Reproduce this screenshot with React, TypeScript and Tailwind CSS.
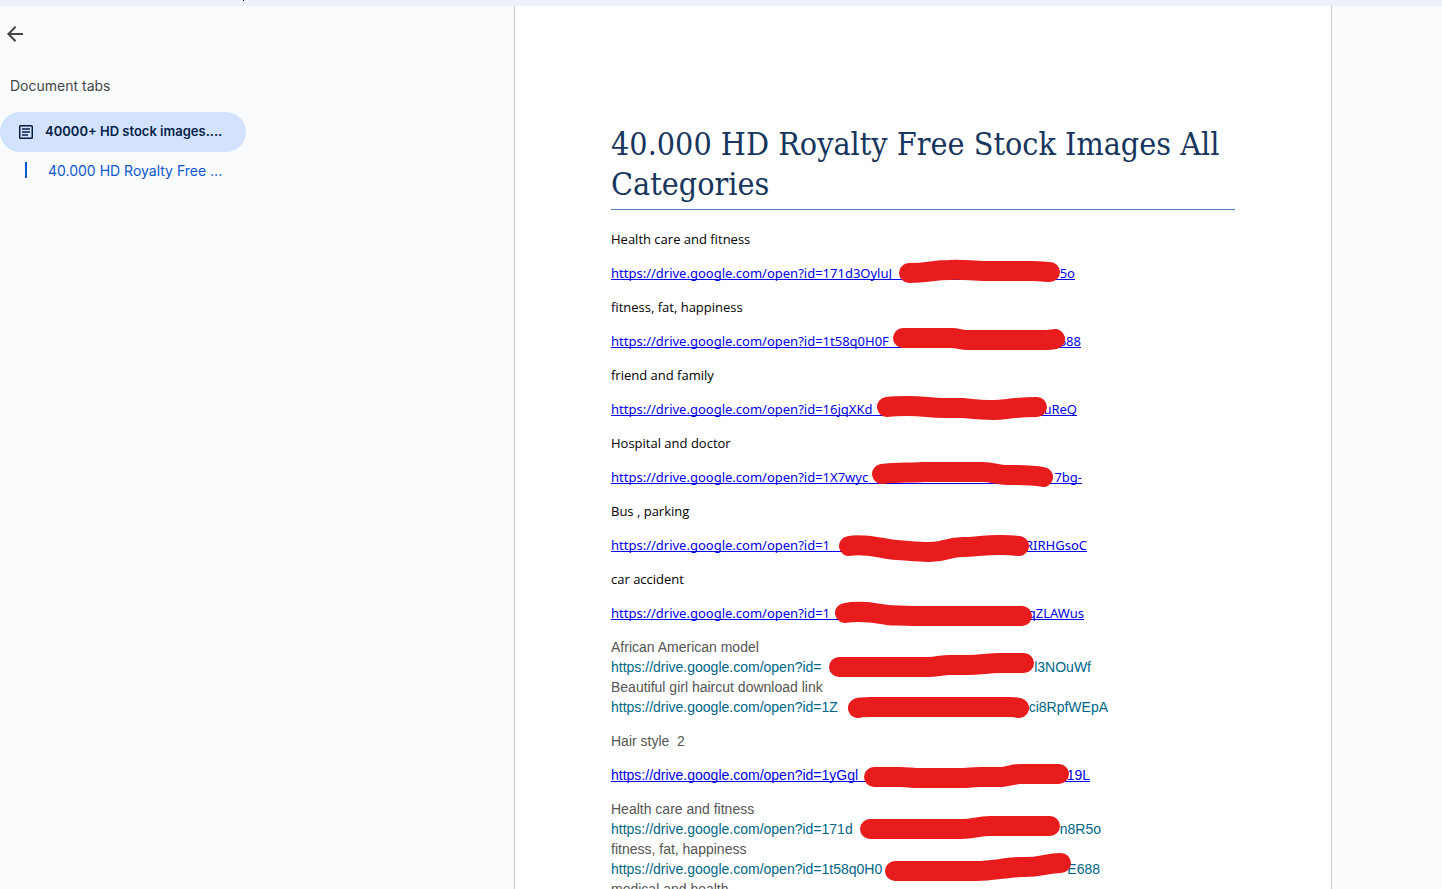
import clsx from "clsx";

type Variant = "calibri" | "arial" | "arialLink";

type Line =
	| { kind: "text"; text: string; variant: Variant; gap?: boolean }
	| {
			kind: "link";
			start: string;
			end: string;
			width: number;
			mark: string;
			variant: Variant;
			gap?: boolean;
	  };

const BASE = "https://drive.google.com/open?id=";

const lines: Line[] = [
	{ kind: "text", text: "Health care and fitness", variant: "calibri", gap: true },
	{
		kind: "link",
		start: "171d3OyluJ",
		end: "5o",
		width: 464,
		mark: "M298 10 C318 10 322 7 338 7 C352 6 360 8 375 8 H421 C430 8 436 9 439 9",
		variant: "calibri",
		gap: true,
	},
	{ kind: "text", text: "fitness, fat, happiness", variant: "calibri", gap: true },
	{
		kind: "link",
		start: "1t58q0H0F",
		end: "688",
		width: 470,
		mark: "M292 7 H341 C347 7 350 9 357 9 H434 Q440 9 444 8",
		variant: "calibri",
		gap: true,
	},
	{ kind: "text", text: "friend and family", variant: "calibri", gap: true },
	{
		kind: "link",
		start: "16jqXKd",
		end: "uReQ",
		width: 466,
		mark: "M276 8 C284 7 290 7 296 7 C316 7 316 9 334 9 H352 C362 10 370 11 382 11 C396 11 400 8 426 8",
		variant: "calibri",
		gap: true,
	},
	{ kind: "text", text: "Hospital and doctor", variant: "calibri", gap: true },
	{
		kind: "link",
		start: "1X7wyc",
		end: "7bg-",
		width: 471,
		mark: "M271 7 C286 5 300 6 312 5 H372 C382 5 386 8 396 8 C406 8 420 8 432 10",
		variant: "calibri",
		gap: true,
	},
	{ kind: "text", text: "Bus , parking", variant: "calibri", gap: true },
	{
		kind: "link",
		start: "1",
		end: "RIRHGsoC",
		width: 476,
		mark: "M238 11 C256 8 270 14 286 15 C300 16 306 17 318 17 C336 17 336 12 352 12 C366 12 382 8 408 11",
		variant: "calibri",
		gap: true,
	},
	{ kind: "text", text: "car accident", variant: "calibri", gap: true },
	{
		kind: "link",
		start: "1",
		end: "qZLAWus",
		width: 473,
		mark: "M234 10 C250 7 264 10 276 12 C284 13 290 12 302 13 H411",
		variant: "calibri",
		gap: true,
	},
	{ kind: "text", text: "African American model", variant: "arial" },
	{
		kind: "link",
		start: "",
		end: "l3NOuWf",
		width: 480,
		mark: "M228 10 H317 C326 10 330 8 339 8 H356 C370 8 376 6 389 6 H413",
		variant: "arial",
	},
	{ kind: "text", text: "Beautiful girl haircut download link", variant: "arial" },
	{
		kind: "link",
		start: "1Z",
		end: "ci8RpfWEpA",
		width: 497,
		mark: "M247 11 Q250 10 259 10 H399 Q404 10 408 11",
		variant: "arial",
		gap: true,
	},
	{ kind: "text", text: "Hair style\u00a0 2", variant: "arial", gap: true },
	{
		kind: "link",
		start: "1yGgl",
		end: "19L",
		width: 479,
		mark: "M263 12 H289 C296 12 300 13 306 13 H352 C358 13 362 12 369 12 H389 C396 12 402 9 409 9 H448",
		variant: "arialLink",
		gap: true,
	},
	{ kind: "text", text: "Health care and fitness", variant: "arial" },
	{
		kind: "link",
		start: "171d",
		end: "n8R5o",
		width: 490,
		mark: "M259 10 H351 C362 10 368 7 379 7 H439",
		variant: "arial",
	},
	{ kind: "text", text: "fitness, fat, happiness", variant: "arial" },
	{
		kind: "link",
		start: "1t58q0H0",
		end: "E688",
		width: 489,
		mark: "M284 12 H366 C380 12 392 9 409 8 C430 9 434 4 450 4",
		variant: "arial",
	},
	{ kind: "text", text: "medical and health", variant: "arial" },
];

const textStyles: Record<Variant, string> = {
	calibri: "font-['Open_Sans',sans-serif] text-[13px] text-black",
	arial: "font-['Liberation_Sans',Arial,sans-serif] text-[14px] text-[#555555]",
	arialLink: "font-['Liberation_Sans',Arial,sans-serif] text-[14px] text-[#555555]",
};

const linkStyles: Record<Variant, string> = {
	calibri:
		"border-[#0000ee] font-['Noto_Sans',sans-serif] text-[13px] text-[#0000ee]",
	arial:
		"border-transparent font-['Liberation_Sans',Arial,sans-serif] text-[14px] text-[#006688]",
	arialLink:
		"border-[#0000ee] font-['Liberation_Sans',Arial,sans-serif] text-[14px] text-[#0000ee]",
};

const Mark = ({ d }: { d: string }) => (
	<svg
		className="pointer-events-none absolute left-0 top-0 h-5 w-full overflow-visible"
		fill="none"
		stroke="#e81c1c"
		strokeWidth="20"
		strokeLinecap="round"
		strokeLinejoin="round"
		aria-hidden="true">
		<path d={d} />
	</svg>
);

const DocLine = ({ line }: { line: Line }) => (
	<p
		className={clsx(
			"relative h-5 leading-5 whitespace-nowrap",
			line.kind === "text" && textStyles[line.variant],
			line.gap && "mb-[14px]"
		)}>
		{line.kind === "text" ? (
			line.text
		) : (
			<>
				<a
					href="#"
					className={clsx(
						"flex h-[17px] justify-between border-b leading-5",
						linkStyles[line.variant]
					)}
					style={{ width: line.width }}>
					<span>
						{BASE}
						{line.start}
					</span>
					<span>{line.end}</span>
				</a>
				<Mark d={line.mark} />
			</>
		)}
	</p>
);

const Sidebar = () => (
	<aside className="w-[514px] shrink-0 font-['Inter',sans-serif] text-[14px]">
		<button
			type="button"
			aria-label="Close tabs and outlines"
			className="mt-[18px] ml-[5px] block text-[#444746]">
			<svg width="20" height="20" viewBox="0 0 20 20" fill="none" stroke="currentColor" strokeWidth="2">
				<path d="M18 10H4M10.6 2.8L3.4 10L10.6 17.2" />
			</svg>
		</button>
		<h2 className="mt-8 ml-[10px] leading-5 text-[#444746]">Document tabs</h2>
		<nav className="mt-4">
			<a
				href="#"
				className="flex h-10 w-[246px] items-center rounded-full bg-[#d3e3fd] pl-[19px] text-[13px] font-semibold text-[#041e49]">
				<svg width="14" height="14" viewBox="0 0 14 14" fill="none" stroke="currentColor" className="shrink-0">
					<rect x="0.75" y="0.75" width="12.5" height="12.5" rx="0.8" strokeWidth="1.5" />
					<path d="M3 4H11M3 7H11M3 10H9" strokeWidth="1.4" />
				</svg>
				<span className="ml-3 whitespace-nowrap">40000+ HD stock images....</span>
			</a>
			<a href="#" className="mt-[10px] ml-[25px] flex h-4 items-center text-[#0b57d0]">
				<span className="h-4 w-[2px] bg-[#0b57d0]" />
				<span className="ml-[21px] whitespace-nowrap">40.000 HD Royalty Free ...</span>
			</a>
		</nav>
	</aside>
);

const App = () => {
	return (
		<div className="flex h-screen flex-col overflow-hidden bg-[#f9fbfd]">
			<header className="h-[6px] shrink-0 bg-[#edf2fa]">
				<div className="ml-[243px] h-px w-px bg-black" />
			</header>
			<div className="flex min-h-0 flex-1">
				<Sidebar />
				<main className="w-full max-w-[818px] overflow-hidden border-x border-[#c7c7c7] bg-white px-24 pt-[118px]">
					<h1 className="mb-[19px] border-b border-[#4f81bd] pb-[5px] font-['DejaVu_Serif_Condensed','DejaVu_Serif',serif] text-[32px] leading-10 text-[#17365d]">
						40.000 HD Royalty Free Stock Images All Categories
					</h1>
					{lines.map((line, i) => (
						<DocLine key={i} line={line} />
					))}
				</main>
			</div>
		</div>
	);
};

export default App;
